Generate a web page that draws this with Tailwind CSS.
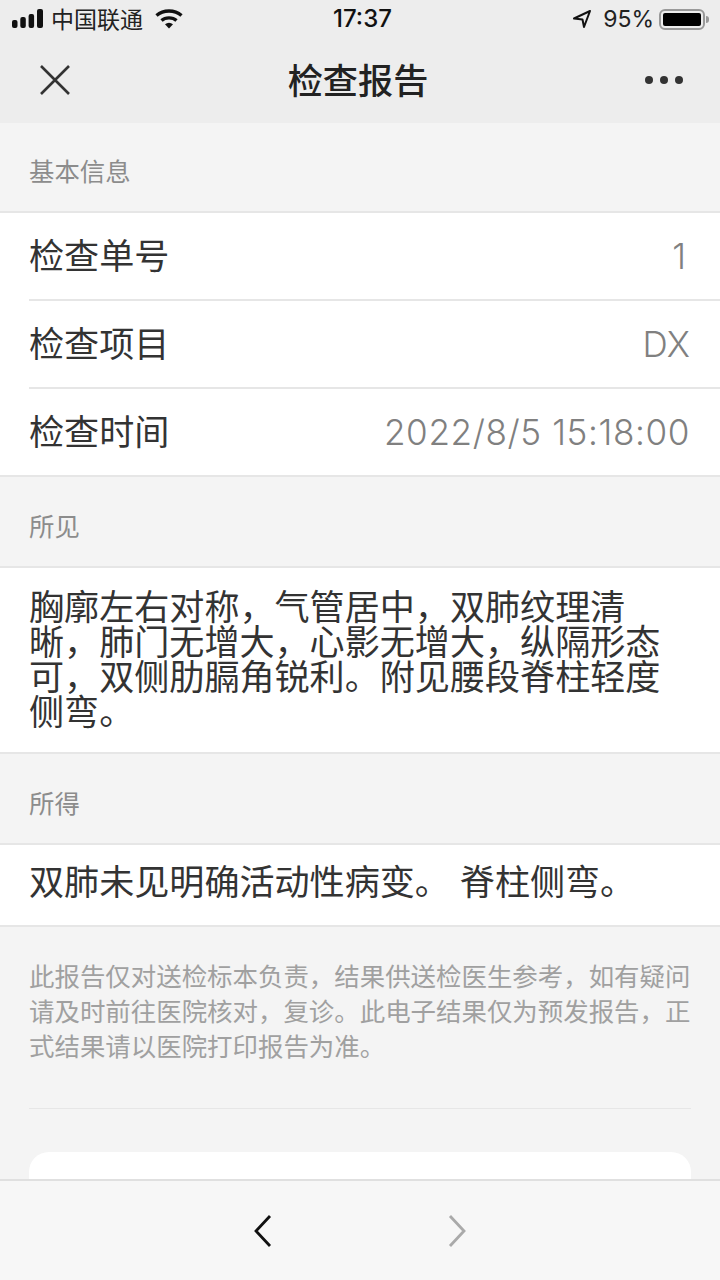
<!DOCTYPE html>
<html lang="zh-CN">
<head>
    <meta charset="UTF-8">
    <meta name="viewport" content="width=device-width, initial-scale=1.0">
    <title>检查报告</title>
    <script src="https://cdn.jsdelivr.net/npm/@tailwindcss/browser@4"></script>
</head>
<body class="w-[720px] h-[1280px] overflow-hidden bg-[#f4f4f4] font-['Inter','Noto_Sans_CJK_SC',sans-serif]">
<div class="relative h-[1280px] flex flex-col overflow-hidden">
    <!-- status bar + title bar -->
    <header class="h-[123px] shrink-0 bg-[#ededed] text-[#111]">
        <div class="h-[40px] relative flex items-center pl-[12px] pr-[11px] text-[23px]">
            <svg width="32" height="20" viewBox="0 0 32 20" class="shrink-0 -mt-[2px]">
                <rect x="0" y="11" width="5.5" height="8" rx="2" fill="#111"/>
                <rect x="8.3" y="8" width="5.5" height="11" rx="2" fill="#111"/>
                <rect x="16.6" y="5" width="5.5" height="14" rx="2" fill="#111"/>
                <rect x="25" y="0" width="6" height="19" rx="2" fill="#111"/>
            </svg>
            <span class="ml-[7px] text-[#222] text-[23px]">中国联通</span>
            <svg width="28" height="20" viewBox="0 0 28 20" class="ml-[12px] -mt-[2px]">
                <path d="M1.5 6.5C8.5 0.5 19.5 0.5 26.5 6.5" fill="none" stroke="#111" stroke-width="3.4"/>
                <path d="M6.5 11.5C10.5 8 17.5 8 21.5 11.5" fill="none" stroke="#111" stroke-width="3.4"/>
                <path d="M10 15.2C12.5 13.2 15.5 13.2 18 15.2L14 19.5Z" fill="#111"/>
            </svg>
            <span class="absolute left-[333px] top-[4px] text-[24px] leading-[30px] font-medium">17:37</span>
            <div class="ml-auto flex items-center -mt-[2px]">
                <svg width="20" height="20" viewBox="0 0 20 20">
                    <path d="M18 2L2 9.5L10.5 10.5L12 18Z" fill="none" stroke="#111" stroke-width="2" stroke-linejoin="round"/>
                </svg>
                <span class="ml-[11px] text-[23px] text-[#222]">95%</span>
                <div class="ml-[5px] w-[46px] h-[21px] rounded-[6px] border-2 border-[#999] p-[2px]">
                    <div class="w-full h-full bg-black rounded-[2px]"></div>
                </div>
                <div class="ml-[1px] w-[3px] h-[7px] bg-[#999] rounded-r-full"></div>
            </div>
        </div>
        <div class="h-[83px] relative flex items-center justify-between pl-[40px] pr-[37px]">
            <svg width="30" height="30" viewBox="0 0 30 30" class="-mt-[3px]">
                <path d="M1 1L29 29M29 1L1 29" stroke="#333" stroke-width="2.6" fill="none"/>
            </svg>
            <h1 class="absolute left-0 right-[4px] top-[18px] text-center text-[35.2px] leading-[46px] font-medium text-[#222]">检查报告</h1>
            <div class="flex gap-[7px] -mt-[3px]">
                <span class="w-[8px] h-[8px] rounded-full bg-[#333]"></span>
                <span class="w-[8px] h-[8px] rounded-full bg-[#333]"></span>
                <span class="w-[8px] h-[8px] rounded-full bg-[#333]"></span>
            </div>
        </div>
    </header>

    <section>
        <div class="h-[88px] pl-[29px] pt-[10px] flex items-center text-[25.4px] text-[#8c8c8c]">基本信息</div>
        <div class="bg-white border-y-2 border-[#e6e6e6] text-[35.1px] text-[#333]">
            <div class="h-[88px] ml-[29px] pr-[30px] flex items-center justify-between border-b-2 border-[#e6e6e6]">
                <span>检查单号</span><span class="font-light mr-[4px] text-[#808080]">1</span>
            </div>
            <div class="h-[88px] ml-[29px] pr-[30px] flex items-center justify-between border-b-2 border-[#e6e6e6]">
                <span>检查项目</span><span class="font-light text-[#808080]">DX</span>
            </div>
            <div class="h-[86px] ml-[29px] pr-[30px] flex items-center justify-between">
                <span>检查时间</span><span class="font-light tracking-[0.6px] text-[#808080]">2022/8/5 15:18:00</span>
            </div>
        </div>
    </section>

    <section>
        <div class="h-[89px] pl-[29px] pt-[11px] flex items-center text-[25.4px] text-[#8c8c8c]">所见</div>
        <div class="bg-white border-y-2 border-[#e6e6e6] pl-[29px] pr-[30px] pt-[22px] pb-[22px] text-[35.1px] leading-[35px] text-[#333]">
            胸廓左右对称，气管居中，双肺纹理清晰，肺门无增大，心影无增大，纵隔形态可，双侧肋膈角锐利。附见腰段脊柱轻度侧弯。
        </div>
    </section>

    <section>
        <div class="h-[89px] pl-[29px] pt-[11px] flex items-center text-[25.4px] text-[#8c8c8c]">所得</div>
        <div class="bg-white border-y-2 border-[#e6e6e6] pl-[29px] pr-[30px] pb-[5px] h-[84px] flex items-center text-[35.1px] text-[#333]">
            双肺未见明确活动性病变。 脊柱侧弯。
        </div>
    </section>

    <p class="mt-[32px] px-[29px] text-[25.45px] leading-[35px] text-[#a0a0a0]">此报告仅对送检标本负责，结果供送检医生参考，如有疑问请及时前往医院核对，复诊。此电子结果仅为预发报告，正式结果请以医院打印报告为准。</p>
    <div class="mx-[29px] mt-[44px] h-[2px] bg-[#e6e6e6]"></div>
    <div class="mx-[29px] mt-[43px] h-[200px] bg-white rounded-[20px]"></div>

    <!-- browser toolbar pinned to the bottom -->
    <nav class="absolute left-0 right-0 bottom-0 h-[101px] bg-[#f7f7f7] border-t-2 border-[#e0e0e0] flex items-center justify-center gap-[176px]">
        <svg width="20" height="34" viewBox="0 0 20 34" class="-ml-[1px]">
            <path d="M18 2L4 17L18 32" fill="none" stroke="#111" stroke-width="2.8"/>
        </svg>
        <svg width="20" height="34" viewBox="0 0 20 34">
            <path d="M2 2L16 17L2 32" fill="none" stroke="#aaa" stroke-width="2.8"/>
        </svg>
    </nav>
</div>
</body>
</html>
